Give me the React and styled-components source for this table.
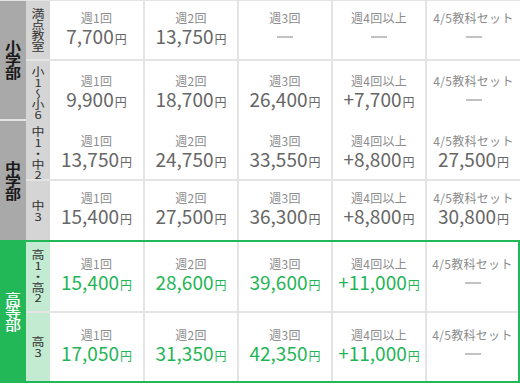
import React from 'react'
import styled, { createGlobalStyle } from 'styled-components'

const GlobalStyle = createGlobalStyle`
  html, body {
    margin: 0;
    padding: 0;
    background: #fff;
  }
  body {
    font-family: "Noto Sans CJK JP", "Noto Sans", sans-serif;
  }
`

const GREEN = '#22b757'
const LINE = '#e4e4e4'

export const Table = styled.div`
  width: 520px;
  border-top: 1px solid ${LINE};
  box-sizing: border-box;
`

export const Section = styled.div`
  display: flex;
  ${({ $divider }) => $divider && `border-bottom: 2px solid ${LINE};`}
  ${({ $accent }) =>
    $accent &&
    `
    border: 2px solid ${GREEN};
    border-left: none;
  `}
`

export const GroupLabel = styled.div`
  width: 26px;
  flex: none;
  display: flex;
  align-items: center;
  justify-content: center;
  background: ${({ $accent }) => ($accent ? GREEN : '#a9a9a9')};
  color: ${({ $accent }) => ($accent ? '#fff' : '#1a1a1a')};
  ${({ $accent }) => $accent && `margin-top: -2px; margin-bottom: -2px;`}
`

export const GroupText = styled.span`
  writing-mode: vertical-rl;
  text-orientation: upright;
  font-size: 16px;
  font-weight: ${({ $accent }) => ($accent ? 500 : 700)};
  line-height: 1;
  transform: scaleY(0.82);
`

export const Rows = styled.div`
  flex: 1;
  display: flex;
  flex-direction: column;
`

export const Row = styled.div`
  display: grid;
  grid-template-columns: 24px 93px 94px 94px 94px 1fr;
  height: ${({ $h }) => $h}px;
  & + & {
    border-top: 2px solid ${LINE};
  }
`

export const SubLabel = styled.div`
  display: flex;
  align-items: center;
  justify-content: center;
  background: ${({ $accent }) => ($accent ? '#c3ebd1' : '#d5d5d5')};
  color: #333;
`

export const SubText = styled.span`
  writing-mode: vertical-rl;
  text-orientation: upright;
  font-size: 13px;
  line-height: 1;
  transform: scaleY(0.84);
`

export const Cell = styled.div`
  display: flex;
  flex-direction: column;
  align-items: center;
  justify-content: center;
  padding-bottom: 5px;
  background: #fff;
  & + & {
    border-left: 2px solid ${LINE};
  }
`

export const Plan = styled.div`
  font-size: 12px;
  line-height: 15px;
  color: #8c8c8c;
  letter-spacing: 0.3px;
`

export const Price = styled.div`
  font-size: 19px;
  line-height: 21px;
  height: 21px;
  display: flex;
  align-items: baseline;
  color: ${({ $accent }) => ($accent ? '#1fb556' : '#666')};
`

export const Yen = styled.span`
  font-size: 12px;
  margin-left: 1px;
`

export const Dash = styled.span`
  display: block;
  width: 16px;
  height: 2px;
  margin-top: 11px;
  background: #c2c2c2;
`

const PLANS = ['週1回', '週2回', '週3回', '週4回以上', '4/5教科セット']

const groups = [
  {
    name: '小学部',
    divider: true,
    rows: [
      { label: '満点教室', h: 58, prices: ['7,700', '13,750', null, null, null] },
      { label: '小1〜小6', h: 58, prices: ['9,900', '18,700', '26,400', '+7,700', null] },
    ],
  },
  {
    name: '中学部',
    rows: [
      { label: '中1・中2', h: 58, prices: ['13,750', '24,750', '33,550', '+8,800', '27,500'] },
      { label: '中3', h: 59, prices: ['15,400', '27,500', '36,300', '+8,800', '30,800'] },
    ],
  },
  {
    name: '高等部',
    accent: true,
    rows: [
      { label: '高1・高2', h: 69, prices: ['15,400', '28,600', '39,600', '+11,000', null] },
      { label: '高3', h: 68, prices: ['17,050', '31,350', '42,350', '+11,000', null] },
    ],
  },
]

function PriceCell({ plan, value, accent }) {
  return (
    <Cell>
      <Plan>{plan}</Plan>
      <Price $accent={accent}>
        {value ? (
          <>
            {value}
            <Yen>円</Yen>
          </>
        ) : (
          <Dash />
        )}
      </Price>
    </Cell>
  )
}

function App() {
  return (
    <>
      <GlobalStyle />
      <Table>
        {groups.map((g) => (
          <Section key={g.name} $divider={g.divider} $accent={g.accent}>
            <GroupLabel $accent={g.accent}>
              <GroupText $accent={g.accent}>{g.name}</GroupText>
            </GroupLabel>
            <Rows>
              {g.rows.map((r) => (
                <Row key={r.label} $h={r.h}>
                  <SubLabel $accent={g.accent}>
                    <SubText>{r.label}</SubText>
                  </SubLabel>
                  {r.prices.map((p, i) => (
                    <PriceCell key={i} plan={PLANS[i]} value={p} accent={g.accent} />
                  ))}
                </Row>
              ))}
            </Rows>
          </Section>
        ))}
      </Table>
    </>
  )
}

export default App
